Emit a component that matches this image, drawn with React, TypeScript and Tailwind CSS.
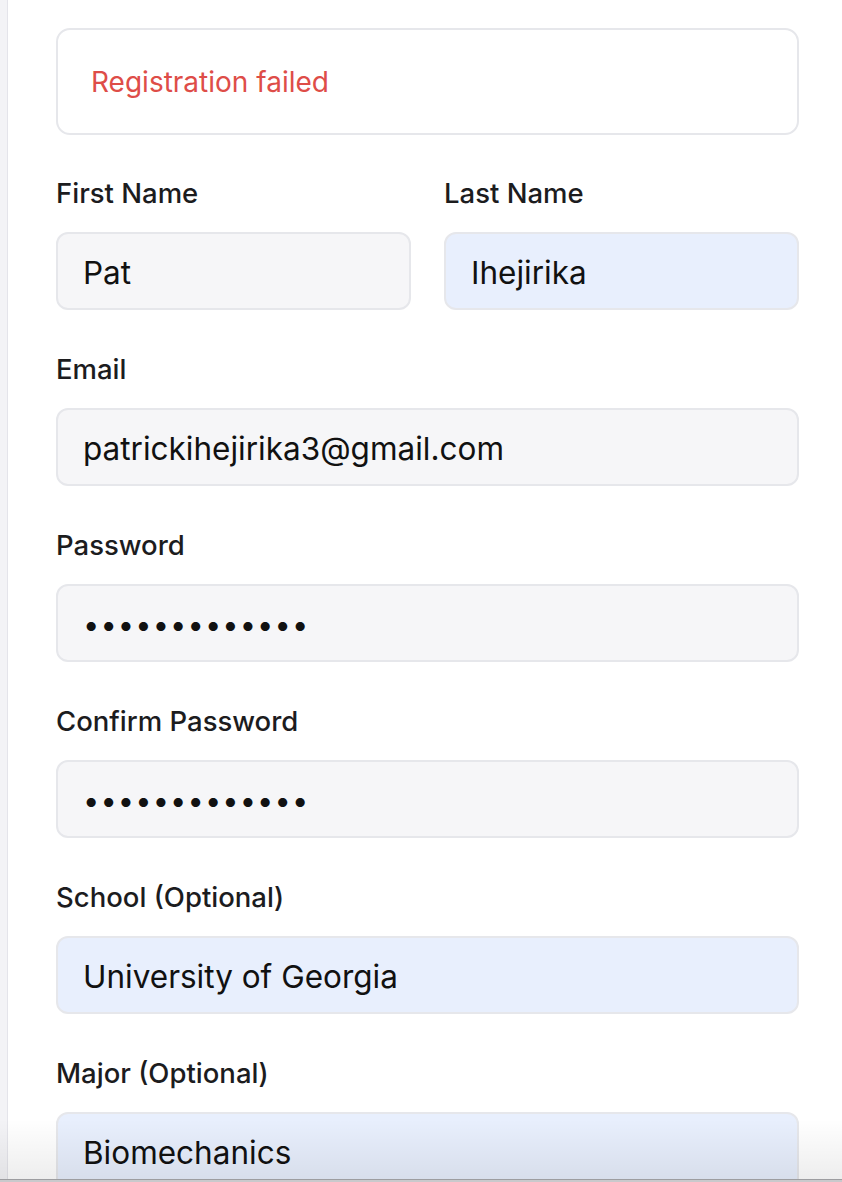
import React from 'react'

type Field = {
  label: string
  value: string
  autofilled?: boolean
  secret?: boolean
}

const fields: Field[] = [
  { label: 'Email', value: 'patrickihejirika3@gmail.com' },
  { label: 'Password', value: '•••••••••••••', secret: true },
  { label: 'Confirm Password', value: '•••••••••••••', secret: true },
  { label: 'School (Optional)', value: 'University of Georgia', autofilled: true },
  { label: 'Major (Optional)', value: 'Biomechanics', autofilled: true },
]

function FieldBox({ value, autofilled, secret }: Omit<Field, 'label'>) {
  return (
    <div
      className={`h-[78px] rounded-[12px] border-2 border-[#e6e7eb] flex items-center px-[25px] pt-[3px] ${
        autofilled ? 'bg-[#e8effd]' : 'bg-[#f6f6f8]'
      }`}
    >
      {secret ? (
        <span className="text-[29px] tracking-[1.1px] text-[#111111] leading-none">{value}</span>
      ) : (
        <span className="text-[31.5px] text-[#111111] leading-none">{value}</span>
      )}
    </div>
  )
}

function Label({ children }: { children: React.ReactNode }) {
  return <div className="text-[27.5px] font-medium text-[#1c1c1e] leading-[32px] mb-[23px]">{children}</div>
}

export default function App() {
  return (
    <div
      className="relative flex h-[1182px] overflow-hidden bg-white"
      style={{ fontFamily: 'Inter, "Noto Sans", sans-serif' }}
    >
      {/* left rail */}
      <div className="w-[8px] shrink-0 bg-[#f3f3f6] border-r border-[#e4e4ea]" />

      <div className="flex-1 pl-[48px] pr-[43px] pt-[28px]">
        <div className="h-[107px] rounded-[14px] border-2 border-[#e6e7eb] flex items-center px-[33px]">
          <span className="text-[28px] text-[#de4d48]">Registration failed</span>
        </div>

        <div className="grid grid-cols-2 gap-x-[33px] mt-[42px]">
          <div>
            <Label>First Name</Label>
            <FieldBox value="Pat" />
          </div>
          <div>
            <Label>Last Name</Label>
            <FieldBox value="Ihejirika" autofilled />
          </div>
        </div>

        {fields.map((f) => (
          <div key={f.label} className="mt-[43px]">
            <Label>{f.label}</Label>
            <FieldBox value={f.value} autofilled={f.autofilled} secret={f.secret} />
          </div>
        ))}
      </div>

      {/* bottom shadow from the browser chrome */}
      <div className="absolute left-0 right-0 bottom-[3px] h-[60px] bg-gradient-to-b from-transparent to-black/[0.07] pointer-events-none" />
      <div className="absolute left-0 right-0 bottom-0 h-[3px] bg-[#c9c9cc] border-t border-[#9d9da0]" />
    </div>
  )
}
